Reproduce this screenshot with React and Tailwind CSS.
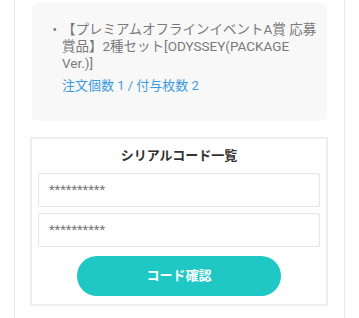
export default function App() {
  const font = { fontFamily: '"Roboto", "Noto Sans CJK JP", sans-serif' };
  return (
    <div className="w-[359px] h-[318px] bg-white overflow-hidden" style={font}>
      <div className="ml-[14px] w-[331px] h-[318px] border-x border-[#e8e8e8] pt-[3px]">
        <div className="ml-[17px] w-[295px] h-[118px] bg-[#f8f8f9] rounded-md pt-[18px] pl-[16px] pr-[10px]">
          <div className="flex text-[13.5px] leading-[17px] text-[#7a7a7a]">
            <span className="w-[14px] shrink-0">・</span>
            <span>【プレミアムオフラインイベントA賞 応募賞品】2種セット[ODYSSEY(PACKAGE Ver.)]</span>
          </div>
          <div className="ml-[14px] mt-[5px] text-[13px] leading-[17px] text-[#3d9be0]">
            注文個数 1 / 付与枚数 2
          </div>
        </div>
        <div className="ml-[15px] mt-[16px] w-[298px] h-[169px] border-2 border-[#eeeeee] px-[6px] pt-[7px]">
          <div className="text-center text-[13px] leading-[20px] font-bold text-[#333333]">
            シリアルコード一覧
          </div>
          <div className="mt-[7px] h-[34px] border border-[#e6e6e6] rounded-[2px] flex items-center pl-[10px] text-[13px] text-[#777777]">
            **********
          </div>
          <div className="mt-[6px] h-[34px] border border-[#e6e6e6] rounded-[2px] flex items-center pl-[10px] text-[13px] text-[#777777]">
            **********
          </div>
          <div className="flex justify-center mt-[9px]">
            <div className="w-[204px] h-[40px] rounded-full bg-[#1fc8c4] flex items-center justify-center text-white font-bold text-[13px]">
              コード確認
            </div>
          </div>
        </div>
      </div>
    </div>
  );
}
